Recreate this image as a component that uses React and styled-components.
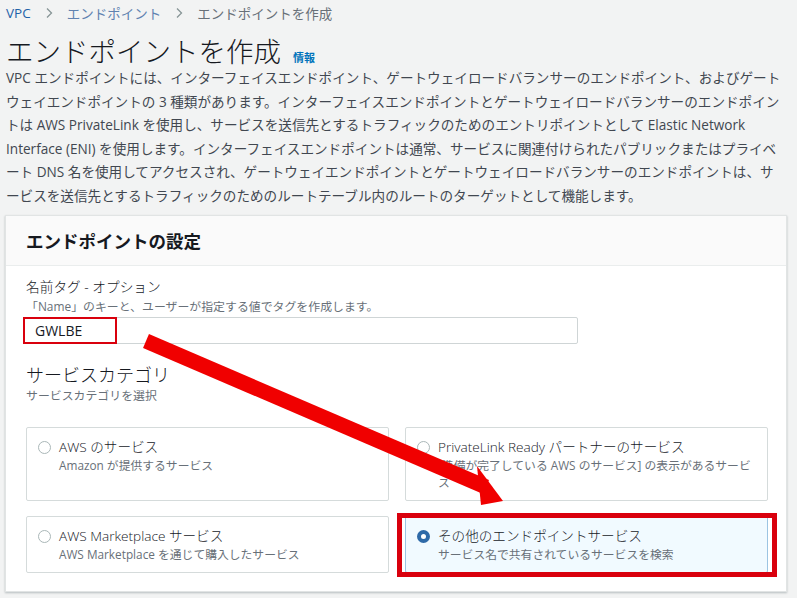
import styled, { createGlobalStyle } from "styled-components";

const Global = createGlobalStyle`
  body {
    margin: 0;
    background: #f2f3f3;
    font-family: "Open Sans", "Noto Sans CJK JP", sans-serif;
    color: #16191f;
  }
`

const Page = styled.div`
  position: relative;
  width: 797px;
  height: 598px;
  overflow: hidden;
  padding: 0 10px 0 5px;
  box-sizing: border-box;
`
const Crumbs = styled.nav`
  display: flex;
  align-items: center;
  height: 26px;
  padding-left: 1px;
  font-size: 13.5px;
  gap: 12px;
  svg {
    width: 12px;
    height: 12px;
  }
`
const Crumb = styled.span`
  color: ${p => p.$color};
`
const TitleRow = styled.div`
  display: flex;
  align-items: baseline;
  gap: 12px;
  margin-top: 10px;
  padding-left: 1px;
  h1 {
    margin: 0;
    font-size: 27.5px;
    font-weight: 300;
    line-height: 32px;
  }
  a {
    font-size: 11px;
    font-weight: 700;
    color: #0073bb;
  }
`
const Desc = styled.div`
  margin-top: -2px;
  padding-left: 1px;
  font-size: 13.6px;
  line-height: 23.6px;
  color: #414750;
  span {
    display: block;
    white-space: nowrap;
  }
`
const Card = styled.section`
  margin-top: 7px;
  background: #fff;
  border: 1px solid #e1e4e4;
  box-shadow: 0 1px 2px rgba(0, 28, 36, 0.25);
`
const CardHeader = styled.div`
  height: 49px;
  display: flex;
  align-items: center;
  padding: 0 20px;
  background: #fafafa;
  border-bottom: 1px solid #eaeded;
  font-size: 17.5px;
  font-weight: 700;
`
const CardBody = styled.div`
  padding: 11px 18px 18px 20px;
`
const Label = styled.div`
  font-size: 13.7px;
  font-weight: 300;
  line-height: 20px;
`
const Hint = styled.div`
  font-size: 11.9px;
  line-height: ${p => p.$lh || 18}px;
  color: #687078;
`
const InputWrap = styled.div`
  position: relative;
  width: 554px;
  margin-top: 2px;
  margin-left: -2px;
`
const Input = styled.div`
  height: 25px;
  border: 1px solid #cfd5d6;
  border-radius: 2px;
  display: flex;
  align-items: center;
  padding-left: 10px;
  font-size: 14px;
`
const Mark = styled.div`
  position: absolute;
  border: ${p => p.$w}px solid #d9000d;
  top: ${p => p.$t}px;
  left: ${p => p.$l}px;
  right: ${p => p.$r}px;
  bottom: ${p => p.$b}px;
  pointer-events: none;
`
const SectionTitle = styled.div`
  margin-top: 19px;
  font-size: 18px;
  font-weight: 300;
  line-height: 24px;
`
const Tiles = styled.div`
  margin-top: 24px;
  display: grid;
  grid-template-columns: 1fr 1fr;
  gap: 15px 16px;
`
const Tile = styled.div`
  position: relative;
  display: flex;
  gap: 8px;
  padding: 9px 10px 9px 11px;
  border: 1px solid ${p => (p.$selected ? "#9cc4e2" : "#d5dbdb")};
  background: ${p => (p.$selected ? "#f1faff" : "#fff")};
  border-radius: 2px;
`
const Radio = styled.span`
  flex: none;
  width: 13px;
  height: 13px;
  margin-top: 4px;
  border-radius: 50%;
  box-sizing: border-box;
  border: ${p => (p.$on ? "4px solid #2e6aa8" : "1.5px solid #aab7b8")};
  background: #fff;
`
const TileText = styled.div`
  strong {
    display: block;
    font-weight: 300;
    font-size: 13.6px;
    line-height: 20px;
  }
  span {
    display: block;
    font-size: 11.8px;
    line-height: 17px;
    color: #687078;
  }
`
const Arrow = styled.svg`
  position: absolute;
  left: 0;
  top: 0;
  pointer-events: none;
`

const Chevron = () => (
  <svg viewBox="0 0 12 12"><path d="M4 1.5 8.5 6 4 10.5" fill="none" stroke="#879596" strokeWidth="1.3" /></svg>
)

const tiles = [
  { title: "AWS のサービス", sub: "Amazon が提供するサービス" },
  { title: "PrivateLink Ready パートナーのサービス", sub: "[準備が完了している AWS のサービス] の表示があるサービス" },
  { title: "AWS Marketplace サービス", sub: "AWS Marketplace を通じて購入したサービス" },
  { title: "その他のエンドポイントサービス", sub: "サービス名で共有されているサービスを検索", selected: true },
]

const lines = [
  "VPC エンドポイントには、インターフェイスエンドポイント、ゲートウェイロードバランサーのエンドポイント、およびゲート",
  "ウェイエンドポイントの 3 種類があります。インターフェイスエンドポイントとゲートウェイロードバランサーのエンドポイン",
  "トは AWS PrivateLink を使用し、サービスを送信先とするトラフィックのためのエントリポイントとして Elastic Network",
  "Interface (ENI) を使用します。インターフェイスエンドポイントは通常、サービスに関連付けられたパブリックまたはプライベ",
  "ート DNS 名を使用してアクセスされ、ゲートウェイエンドポイントとゲートウェイロードバランサーのエンドポイントは、サ",
  "ービスを送信先とするトラフィックのためのルートテーブル内のルートのターゲットとして機能します。",
]

export default function App() {
  return (
    <>
      <Global />
      <Page>
        <Crumbs>
          <Crumb $color="#1f62a8">VPC</Crumb>
          <Chevron />
          <Crumb $color="#5f82b0">エンドポイント</Crumb>
          <Chevron />
          <Crumb $color="#687078">エンドポイントを作成</Crumb>
        </Crumbs>
        <TitleRow>
          <h1>エンドポイントを作成</h1>
          <a>情報</a>
        </TitleRow>
        <Desc>
          {lines.map(l => <span key={l}>{l}</span>)}
        </Desc>
        <Card>
          <CardHeader>エンドポイントの設定</CardHeader>
          <CardBody>
            <Label>名前タグ - オプション</Label>
            <Hint>「Name」のキーと、ユーザーが指定する値でタグを作成します。</Hint>
            <InputWrap>
              <Input>GWLBE</Input>
              <Mark $w={2} $t={0} $l={-1} $r={461} $b={0} />
            </InputWrap>
            <SectionTitle>サービスカテゴリ</SectionTitle>
            <Hint $lh={16}>サービスカテゴリを選択</Hint>
            <Tiles>
              {tiles.map(t => (
                <Tile key={t.title} $selected={t.selected}>
                  <Radio $on={t.selected} />
                  <TileText>
                    <strong>{t.title}</strong>
                    <span>{t.sub}</span>
                  </TileText>
                  {t.selected && <Mark $w={5} $t={-4} $l={-9} $r={-10} $b={-5} />}
                </Tile>
              ))}
            </Tiles>
          </CardBody>
        </Card>
        <Arrow width="797" height="598">
          <line x1="146" y1="341" x2="486" y2="487" stroke="#f00000" strokeWidth="15" />
          <polygon points="503,501 477,466 481,505" fill="#f00000" />
        </Arrow>
      </Page>
    </>
  );
}
